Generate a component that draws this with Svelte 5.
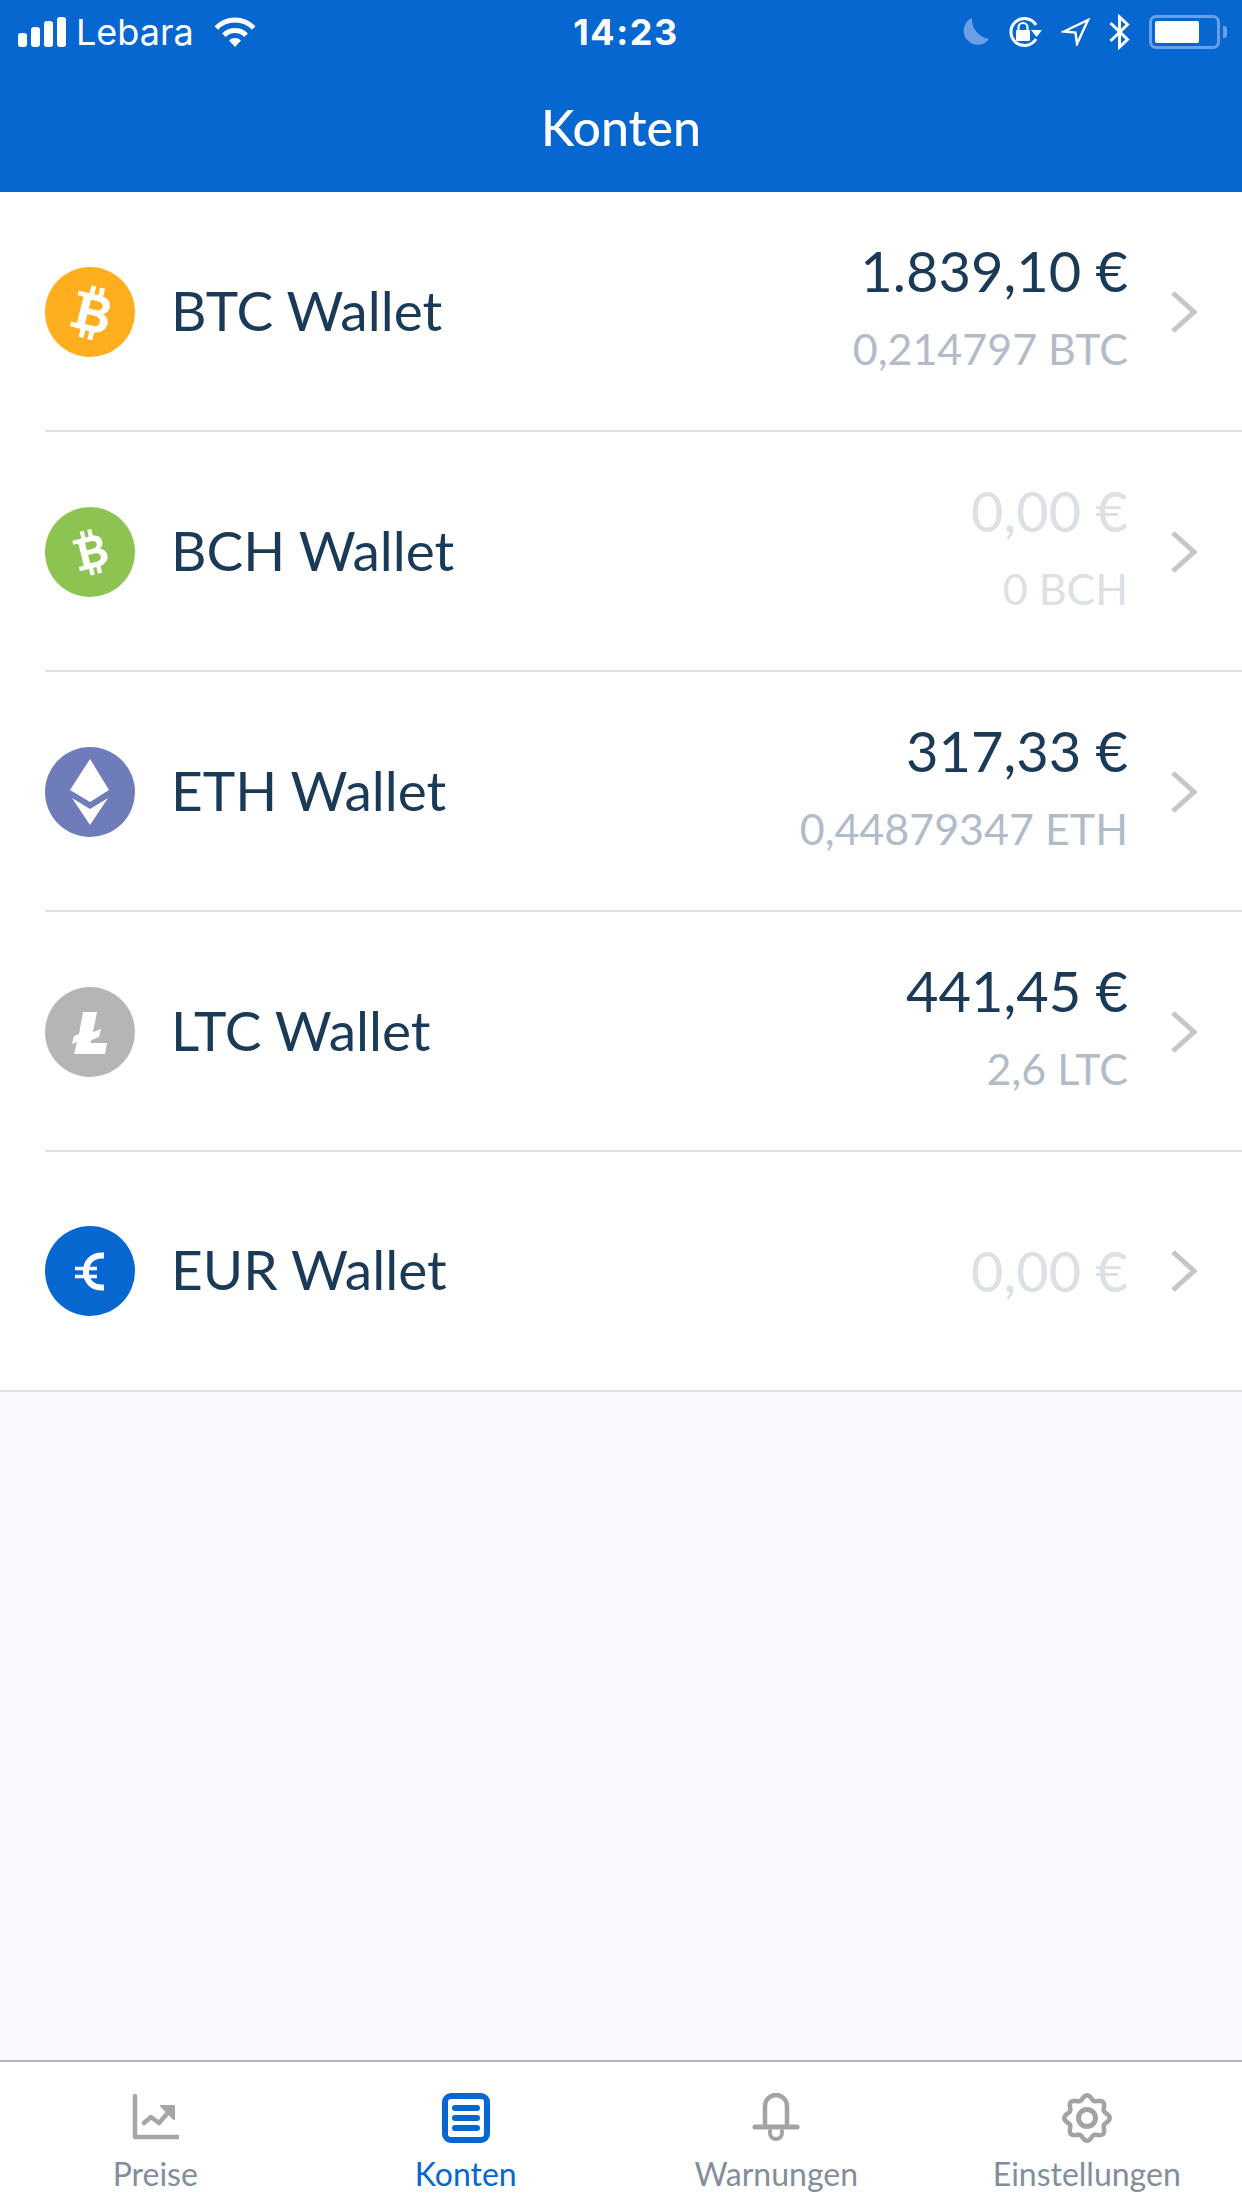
<script lang="ts">
	const wallets = [
		{ id: 'btc', name: 'BTC Wallet', color: '#ffae1d', amount: '1.839,10 €', sub: '0,214797 BTC', empty: false },
		{ id: 'bch', name: 'BCH Wallet', color: '#8dc351', amount: '0,00 €', sub: '0 BCH', empty: true },
		{ id: 'eth', name: 'ETH Wallet', color: '#6f7cba', amount: '317,33 €', sub: '0,44879347 ETH', empty: false },
		{ id: 'ltc', name: 'LTC Wallet', color: '#b5b5b5', amount: '441,45 €', sub: '2,6 LTC', empty: false },
		{ id: 'eur', name: 'EUR Wallet', color: '#0667d0', amount: '0,00 €', sub: '', empty: true }
	];

	// wavy outline for the settings cog, 8 lobes
	const gearPath = (() => {
		const pts: string[] = [];
		for (let i = 0; i < 160; i++) {
			const t = (i / 160) * Math.PI * 2;
			const r = 20.5 + 2.2 * Math.cos(8 * t);
			pts.push(`${(25 + r * Math.sin(t)).toFixed(2)} ${(25 - r * Math.cos(t)).toFixed(2)}`);
		}
		return 'M' + pts.join('L') + 'Z';
	})();
</script>

{#snippet bitcoin(transform: string)}
	<g {transform} fill="#fff">
		<path
			fill-rule="evenodd"
			d="M-17 -18H6C14 -18 17 -13 17 -9C17 -5 15 -2 12 -1C16 0 19 4 19 8C19 14 14 19 6 19H-17V14H-11V-13H-17ZM-3 -12V-3H4C8 -3 10 -5 10 -7.5C10 -10 8 -12 4 -12ZM-3 3V13H5C9 13 11 11 11 8C11 5 9 3 5 3Z"
		/>
		<rect x="-6" y="-26" width="5" height="9" />
		<rect x="3" y="-26" width="5" height="9" />
		<rect x="-6" y="18" width="5" height="9" />
		<rect x="3" y="18" width="5" height="9" />
	</g>
{/snippet}

<div class="screen">
	<header class="topbar">
		<div class="status">
			<div class="status-left">
				<div class="signal">
					<span style="height: 14px"></span>
					<span style="height: 20px"></span>
					<span style="height: 26px"></span>
					<span style="height: 30px"></span>
				</div>
				<span class="carrier">Lebara</span>
				<svg class="wifi" width="42" height="30" viewBox="0 0 42 30" fill="none" stroke="#fff" stroke-width="5">
					<path d="M2.3 11A26 26 0 0 1 39.7 11" />
					<path d="M9.9 18.2A15.5 15.5 0 0 1 32.1 18.2" />
					<path d="M21 30L15 23.5A8.5 8.5 0 0 1 27 23.5Z" fill="#fff" stroke="none" />
				</svg>
			</div>
			<span class="time">14:23</span>
			<div class="status-right">
				<svg width="27" height="28" viewBox="0 0 27 28">
					<path d="M10 0A14 14 0 1 0 27 21A20 20 0 0 1 10 0Z" fill="#6a9fe6" />
				</svg>
				<svg width="34" height="30" viewBox="0 0 34 30" fill="none" stroke="#fff" stroke-width="3">
					<path d="M28 22A13.5 13.5 0 1 1 28 8" />
					<path d="M23 13H34L28.500 20Z" fill="#fff" stroke="none" />
					<rect x="8" y="13" width="14" height="11" rx="1" fill="#fff" stroke="none" />
					<path d="M10.5 13V10.5A4.500 4.500 0 0 1 19.5 10.5V13" stroke-width="2.2" />
				</svg>
				<svg width="29" height="28" viewBox="0 0 29 28" fill="none" stroke="#fff" stroke-width="2.4" stroke-linejoin="miter">
					<path d="M3 13.5L27 2L16 26L14.5 14.5Z" />
				</svg>
				<svg width="21" height="36" viewBox="0 0 21 36" fill="none" stroke="#fff" stroke-width="3">
					<path d="M1.5 9L18.5 25.5L10.5 33V3L18.5 10.5L1.5 27" />
				</svg>
				<div class="battery">
					<div class="battery-body"><div class="battery-fill"></div></div>
					<div class="battery-cap"></div>
				</div>
			</div>
		</div>
		<h1 class="title">Konten</h1>
	</header>

	<main class="list">
		{#each wallets as w}
			<div class="row">
				<svg class="coin" width="90" height="90" viewBox="0 0 90 90">
					<circle cx="45" cy="45" r="45" fill={w.color} />
					{#if w.id === 'btc'}
						{@render bitcoin('translate(46 45) rotate(14)')}
					{:else if w.id === 'bch'}
						{@render bitcoin('translate(45 45) rotate(-14) scale(.85)')}
					{:else if w.id === 'eth'}
						<path d="M45 12L64 43L45 55L25 43Z" fill="#fff" />
						<path d="M27 51L45 62L63 51L45 78Z" fill="#fff" />
					{:else if w.id === 'ltc'}
						<path
							d="M38 25H52L48 45L56 42L54 50L46.500 53L45.500 56H62L60 67H29L32 55L27 57L29 49L34 47Z"
							fill="#fff"
						/>
					{:else}
						<g fill="none" stroke="#fff">
							<path d="M59 29.500H57C47 29.500 41 36 41 45.500C41 55 47 61.500 57 61.500H59" stroke-width="6" />
							<path d="M30 42.500H52M30 50.500H52" stroke-width="3.500" />
						</g>
					{/if}
				</svg>
				<div class="row-main">
					<span class="name">{w.name}</span>
					<div class="values" class:empty={w.empty}>
						<span class="amount">{w.amount}</span>
						{#if w.sub}
							<span class="sub">{w.sub}</span>
						{/if}
					</div>
					<svg class="chevron" width="26" height="44" viewBox="0 0 26 44" fill="none" stroke="#c6c6c6" stroke-width="5">
						<path d="M2 3L23 22L2 41" />
					</svg>
				</div>
			</div>
		{/each}
	</main>

	<nav class="tabs">
		<div class="tab">
			<svg width="48" height="50" viewBox="-2 0 48 50" fill="none" stroke="#a6a6a6" stroke-linecap="round" stroke-linejoin="round">
				<path d="M2 3V44H45" stroke-width="4.500" />
				<path d="M11 30L18 24L26 30L39 15" stroke-width="4.500" />
				<path d="M28 13H41V26Z" fill="#a6a6a6" stroke-width="2" />
			</svg>
			<span>Preise</span>
		</div>
		<div class="tab active">
			<svg width="48" height="50" viewBox="0 0 48 50" fill="none" stroke="#0667d0" stroke-linecap="round">
				<rect x="3" y="3" width="42" height="44" rx="6" stroke-width="6" />
				<path d="M13 15H35M13 25H35M13 35H35" stroke-width="6" />
			</svg>
			<span>Konten</span>
		</div>
		<div class="tab">
			<svg width="48" height="50" viewBox="0 0 48 50" fill="none" stroke="#a3a3a3" stroke-linecap="round">
				<path d="M13 34V13A11 11 0 0 1 35 13V34" stroke-width="4.500" />
				<path d="M3 34H45" stroke-width="5" />
				<path d="M18 38V40A6 6 0 0 0 30 40V38" stroke-width="4" />
			</svg>
			<span>Warnungen</span>
		</div>
		<div class="tab">
			<svg width="50" height="50" viewBox="0 0 50 50" fill="none" stroke="#a3a3a3" stroke-width="4.500">
				<path d={gearPath} />
				<circle cx="25" cy="25" r="8.500" stroke-width="5" />
			</svg>
			<span>Einstellungen</span>
		</div>
	</nav>
</div>

<style>
	:global(body) {
		margin: 0;
	}

	.screen {
		width: 1242px;
		height: 2208px;
		display: flex;
		flex-direction: column;
		background: #f7f9fc;
		font-family: Lato, 'Open Sans', sans-serif;
		overflow: hidden;
	}

	.topbar {
		height: 192px;
		background: #0667d0;
		color: #fff;
		flex-shrink: 0;
		display: flex;
		flex-direction: column;
	}

	.status {
		height: 64px;
		display: grid;
		grid-template-columns: 1fr auto 1fr;
		align-items: center;
		font-family: Inter, Roboto, sans-serif;
	}

	.status-left {
		display: flex;
		align-items: center;
		padding-left: 18px;
	}

	.signal {
		display: flex;
		align-items: flex-end;
		gap: 4px;
		height: 30px;
	}

	.signal span {
		width: 9px;
		background: #fff;
		border-radius: 3px;
	}

	.carrier {
		font-size: 36px;
		margin-left: 10px;
		margin-right: 20px;
	}

	.time {
		font-size: 36px;
		font-weight: 700;
		letter-spacing: 1.5px;
		padding-left: 10px;
	}

	.status-right {
		display: flex;
		align-items: center;
		justify-content: flex-end;
		gap: 19px;
		padding-right: 15px;
	}

	.battery {
		display: flex;
		align-items: center;
		gap: 3px;
	}

	.battery-body {
		width: 71px;
		height: 34px;
		box-sizing: border-box;
		border: 3px solid #6a9fe6;
		border-radius: 7px;
		padding: 3px;
	}

	.battery-fill {
		width: 44px;
		height: 100%;
		background: #fff;
		border-radius: 2px;
	}

	.battery-cap {
		width: 4px;
		height: 12px;
		background: #6a9fe6;
		border-radius: 0 3px 3px 0;
	}

	.title {
		flex: 1;
		margin: 0;
		display: flex;
		align-items: center;
		justify-content: center;
		font-size: 50px;
		font-weight: 500;
		padding-bottom: 2px;
	}

	.list {
		background: #fff;
		flex-shrink: 0;
		border-bottom: 2px solid #dcdfe6;
	}

	.row {
		position: relative;
		height: 240px;
		box-sizing: border-box;
		display: flex;
		align-items: center;
		padding-left: 45px;
	}

	.row:last-child {
		height: 238px;
	}

	.row:not(:last-child)::after {
		content: '';
		position: absolute;
		left: 45px;
		right: 0;
		bottom: 0;
		height: 2px;
		background: #dcdfe6;
	}

	.coin {
		flex-shrink: 0;
		margin-right: 36px;
	}

	.row-main {
		display: flex;
		align-items: center;
		flex: 1;
		height: 100%;
		padding-right: 45px;
	}

	.name {
		flex: 1;
		font-size: 55px;
		color: #1b3a57;
		padding-bottom: 5px;
	}

	.values {
		display: flex;
		flex-direction: column;
		align-items: flex-end;
		gap: 22px;
		margin-right: 43px;
	}

	.amount {
		font-size: 56px;
		line-height: 62px;
		color: #1b3a57;
	}

	.sub {
		font-size: 43px;
		line-height: 50px;
		color: #b2bcc8;
		margin-bottom: 10px;
	}

	.empty .amount,
	.empty .sub {
		color: #dde0e4;
	}

	.tabs {
		margin-top: auto;
		height: 148px;
		box-sizing: border-box;
		background: #fff;
		border-top: 2px solid #b4b4b4;
		display: grid;
		grid-template-columns: repeat(4, 1fr);
		padding-top: 31px;
	}

	.tab {
		display: flex;
		flex-direction: column;
		align-items: center;
		gap: 11px;
		font-size: 32px;
		color: #848e9b;
	}

	.tab.active {
		color: #0667d0;
	}
</style>
